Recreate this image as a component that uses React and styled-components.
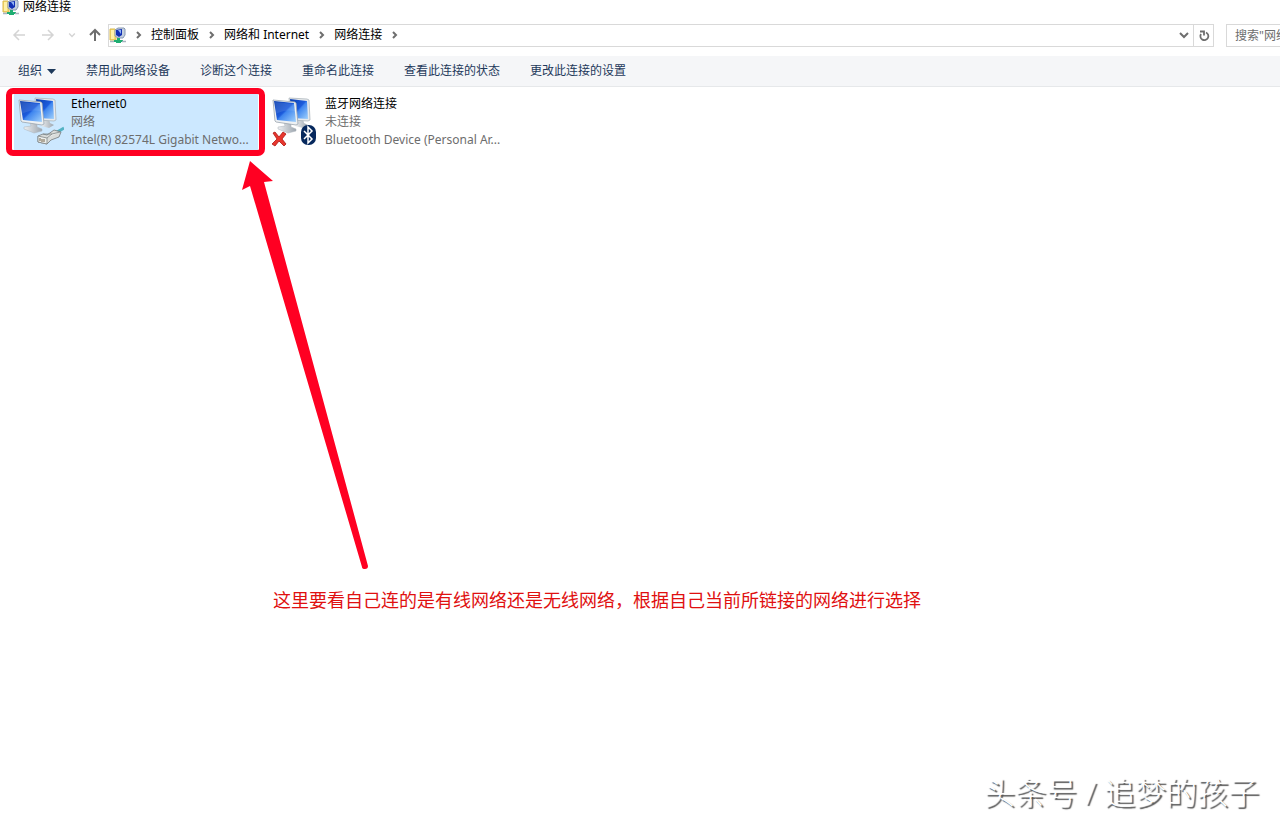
import React from 'react';
import styled, { createGlobalStyle } from 'styled-components';

const Global = createGlobalStyle`
  * { box-sizing: border-box; }
  body {
    margin: 0;
    background: #fff;
    color: #000;
    font: 12px/18px "Noto Sans", "Noto Sans CJK SC", sans-serif;
  }
  button, input { font: inherit; }
`;

const Window = styled.div`
  position: relative;
  display: flex;
  flex-direction: column;
  min-height: 100vh;
  overflow: hidden;
`;

const TitleBar = styled.header`
  display: flex;
  align-items: center;
  gap: 4px;
  height: 14px;
  padding-left: 2px;
`;

const Title = styled.h1`
  margin: 0;
  font-size: 12px;
  font-weight: 400;
  line-height: 14px;
`;

const NavBar = styled.nav`
  display: flex;
  align-items: center;
  height: 42px;
`;

const IconButton = styled.button`
  display: flex;
  align-items: center;
  justify-content: center;
  width: ${(p) => p.$width}px;
  height: 22px;
  padding: 0;
  border: 0;
  background: none;
  color: ${(p) => (p.$muted ? '#d4d4d4' : '#6e6e6e')};
`;

const History = styled.div`
  display: flex;
  flex: none;
  width: 108px;
  padding-left: 4px;
`;

const Address = styled.div`
  display: flex;
  align-items: center;
  flex: 1;
  height: 23px;
  border: 1px solid #d9d9d9;
`;

const Crumbs = styled.ol`
  display: flex;
  flex: 1;
  align-items: center;
  margin: 0;
  padding: 0;
  list-style: none;
`;

const Crumb = styled.li`
  display: flex;
  align-items: center;
`;

const CrumbLink = styled.a`
  color: #000;
  text-decoration: none;
  white-space: nowrap;
`;

const Separator = styled.span`
  display: flex;
  justify-content: center;
  width: 25px;
  color: #6e6e6e;
`;

const Refresh = styled.div`
  height: 21px;
  border-left: 1px solid #d9d9d9;
`;

const Search = styled.input`
  flex: none;
  width: 54px;
  height: 23px;
  margin-left: 12px;
  padding: 0 0 0 8px;
  border: 1px solid #d9d9d9;
  border-right: 0;
  border-radius: 0;
  outline: 0;
  &::placeholder { color: #6d6d6d; opacity: 1; }
`;

const Toolbar = styled.div`
  display: flex;
  align-items: center;
  gap: 30px;
  height: 31px;
  padding-left: 18px;
  border-bottom: 1px solid #e6e8ea;
  background: #f5f6f8;
`;

const Command = styled.button`
  display: flex;
  align-items: center;
  gap: 5px;
  padding: 0;
  border: 0;
  background: none;
  color: #1e395b;
  white-space: nowrap;
`;

const Connections = styled.main`
  display: flex;
  gap: 10px;
  padding: 6px 14px;
`;

const Connection = styled.article`
  position: relative;
  display: flex;
  gap: 7px;
  width: 244px;
  height: 58px;
  padding: 2px 0 0 2px;
  background: ${(p) => (p.$selected ? '#cce8ff' : 'transparent')};
`;

const Details = styled.div`
  flex: 1;
  min-width: 0;
`;

const Name = styled.h2`
  margin: 0;
  font-size: 12px;
  font-weight: 400;
`;

const Detail = styled.p`
  margin: 0;
  color: #6d6d6d;
  white-space: nowrap;
`;

const Highlight = styled.div`
  position: absolute;
  inset: -5px -7px -5px -8px;
  border: 6px solid #ff0022;
  border-radius: 7px;
`;

const Arrow = styled.svg`
  position: absolute;
  left: 240px;
  top: 158px;
`;

const Note = styled.p`
  position: absolute;
  left: 273px;
  top: 586px;
  margin: 0;
  color: #e01010;
  font-size: 18px;
  line-height: 28px;
  white-space: nowrap;
`;

const Watermark = styled.footer`
  position: absolute;
  right: 21px;
  bottom: 9px;
  color: #fff;
  font-size: 31px;
  font-weight: 300;
  line-height: 40px;
  text-shadow: 2px 2px 1px #555;
  white-space: nowrap;
`;

const Stroke = ({ d, size = 14, weight = 2 }) => (
  <svg width={size} height={size} viewBox="0 0 14 14" fill="none" stroke="currentColor" strokeWidth={weight} aria-hidden="true">
    <path d={d} />
  </svg>
);

const chevronRight = 'M5 4l3 3-3 3';
const chevronDown = 'M3 5l4 4 4-4';

const NetworkFolder = () => (
  <svg width="17" height="17" viewBox="0 0 17 17" aria-hidden="true">
    <path d="M1 2h5l1 1v10H1z" fill="#f5dc73" stroke="#d9b84a" />
    <path d="M2 3h3v9H2z" fill="#fff0a6" />
    <path d="M9 1h6l1 1v6l-2 3H9L6 9V3z" fill="#c4cfdf" stroke="#8798b1" />
    <path d="M7 3l6-1v6l-3 2-3-2z" fill="#1230b4" />
    <path d="M9 3l3 0v4z" fill="#8fb2f5" />
    <path d="M8 11h3v2h3v2h-2v1H7v-1H5v-2h3z" fill="#1fae72" />
    <path d="M1 14.500h4M13 14.500h4" stroke="#a8b3bf" strokeWidth="1.500" />
  </svg>
);

const Monitors = () => (
  <>
    <defs>
      <linearGradient id="screen" x1="0" y1="0" x2="1" y2="1">
        <stop offset="0" stopColor="#0b3fae" />
        <stop offset=".48" stopColor="#1c5bdc" />
        <stop offset=".54" stopColor="#3f86ef" />
        <stop offset="1" stopColor="#a2d2fc" />
      </linearGradient>
      <linearGradient id="stand" x1="0" y1="0" x2="1" y2="0">
        <stop offset="0" stopColor="#eef0f2" />
        <stop offset="1" stopColor="#9ca5ae" />
      </linearGradient>
    </defs>
    <path d="M27 25l6-1 1 4 4 2-5 3-8-2 3-2z" fill="url(#stand)" />
    <path d="M19 3l18 1 2 1 1 20-2 1-17-1z" fill="#e7eaed" stroke="#a4adb5" strokeWidth=".7" />
    <path d="M20 4l17 2 1 18-16-1z" fill="url(#screen)" />
    <path d="M14 27l7 1v4l5 2v2l-8 2-10-4v-2l7-1z" fill="url(#stand)" stroke="#abb3ba" strokeWidth=".5" />
    <path d="M3 5l22 2 1 1 2 21-2 1L6 27 5 26z" fill="#eef1f3" stroke="#9ba5ae" strokeWidth=".8" />
    <path d="M4 6l20 2 2 19L7 25z" fill="url(#screen)" />
    <path d="M5 7l19 2 1 7Q14 14 6 19z" fill="#fff" opacity=".1" />
  </>
);

const EthernetIcon = () => (
  <svg width="48" height="52" viewBox="0 0 48 52" aria-hidden="true">
    <Monitors />
    <path d="M38 38c4 0 6-3 10-5" stroke="#54b3c4" strokeWidth="3" fill="none" />
    <path d="M22 41l5-2 4 1 7-5 7 2-2 5-8 3-4 4-9-2z" fill="#d9dcda" stroke="#73797b" strokeWidth=".8" />
    <path d="M22 41l9 2v6l-9-2zM31 43l5-4 8-2M27 39l9 0" fill="#eceeec" stroke="#7f8586" strokeWidth=".8" />
    <path d="M24 43v3m2-2v3m2-3v3" stroke="#75654a" />
  </svg>
);

const BluetoothIcon = () => (
  <svg width="48" height="52" viewBox="0 0 48 52" aria-hidden="true">
    <Monitors />
    <path d="M3 38l2-1 4 5 4-5 3 2-4 5 4 5-2 2-5-5-4 5-3-2 5-5z" fill="#e8372e" stroke="#ae1713" strokeWidth=".8" />
    <rect x="31" y="30" width="15" height="20" rx="7" fill="#06285d" />
    <path d="M34 36l8 8-4 4V32l4 4-8 8" fill="none" stroke="#fff" strokeWidth="1.500" />
  </svg>
);

const crumbs = ['控制面板', '网络和 Internet', '网络连接'];
const commands = ['禁用此网络设备', '诊断这个连接', '重命名此连接', '查看此连接的状态', '更改此连接的设置'];

export default function App() {
  return (
    <Window>
      <Global />
      <TitleBar>
        <NetworkFolder />
        <Title>网络连接</Title>
      </TitleBar>
      <NavBar>
        <History>
          <IconButton $width={29} $muted aria-label="后退"><Stroke d="M13 7H2M7 2L2 7l5 5" weight={1.5} /></IconButton>
          <IconButton $width={29} $muted aria-label="前进"><Stroke d="M1 7h11M7 2l5 5-5 5" weight={1.5} /></IconButton>
          <IconButton $width={20} $muted aria-label="最近位置"><Stroke d={chevronDown} size={10} /></IconButton>
          <IconButton $width={26} aria-label="上移"><Stroke d="M7 13V2M2 7l5-5 5 5" /></IconButton>
        </History>
        <Address>
          <NetworkFolder />
          <Crumbs>
            <Crumb><Separator><Stroke d={chevronRight} size={14} /></Separator></Crumb>
            {crumbs.map((crumb) => (
              <Crumb key={crumb}>
                <CrumbLink href="#">{crumb}</CrumbLink>
                <Separator><Stroke d={chevronRight} size={14} /></Separator>
              </Crumb>
            ))}
          </Crumbs>
          <IconButton $width={19} aria-label="历史记录"><Stroke d={chevronDown} /></IconButton>
          <Refresh>
            <IconButton $width={19} aria-label="刷新"><Stroke d="M9 3.500a4 4 0 1 1-5 1.500M3 2.500h4v4" weight={1.8} /></IconButton>
          </Refresh>
        </Address>
        <Search aria-label="搜索" placeholder={'搜索"网络连接"'} />
      </NavBar>
      <Toolbar>
        <Command>
          组织
          <svg width="9" height="5" viewBox="0 0 9 5" aria-hidden="true"><path d="M0 0h9L4.500 5z" fill="currentColor" /></svg>
        </Command>
        {commands.map((command) => <Command key={command}>{command}</Command>)}
      </Toolbar>
      <Connections>
        <Connection $selected>
          <EthernetIcon />
          <Details>
            <Name>Ethernet0</Name>
            <Detail>网络</Detail>
            <Detail>Intel(R) 82574L Gigabit Netwo...</Detail>
          </Details>
          <Highlight />
        </Connection>
        <Connection>
          <BluetoothIcon />
          <Details>
            <Name>蓝牙网络连接</Name>
            <Detail>未连接</Detail>
            <Detail>Bluetooth Device (Personal Ar...</Detail>
          </Details>
        </Connection>
      </Connections>
      <Arrow width="134" height="414" viewBox="0 0 134 414" aria-hidden="true">
        <path d="M10 3L33 23l-9 1L128 408q0 3-3 3t-3-2L10 28l-8 4z" fill="#ff0022" />
      </Arrow>
      <Note>这里要看自己连的是有线网络还是无线网络，根据自己当前所链接的网络进行选择</Note>
      <Watermark>头条号 / 追梦的孩子</Watermark>
    </Window>
  );
}
